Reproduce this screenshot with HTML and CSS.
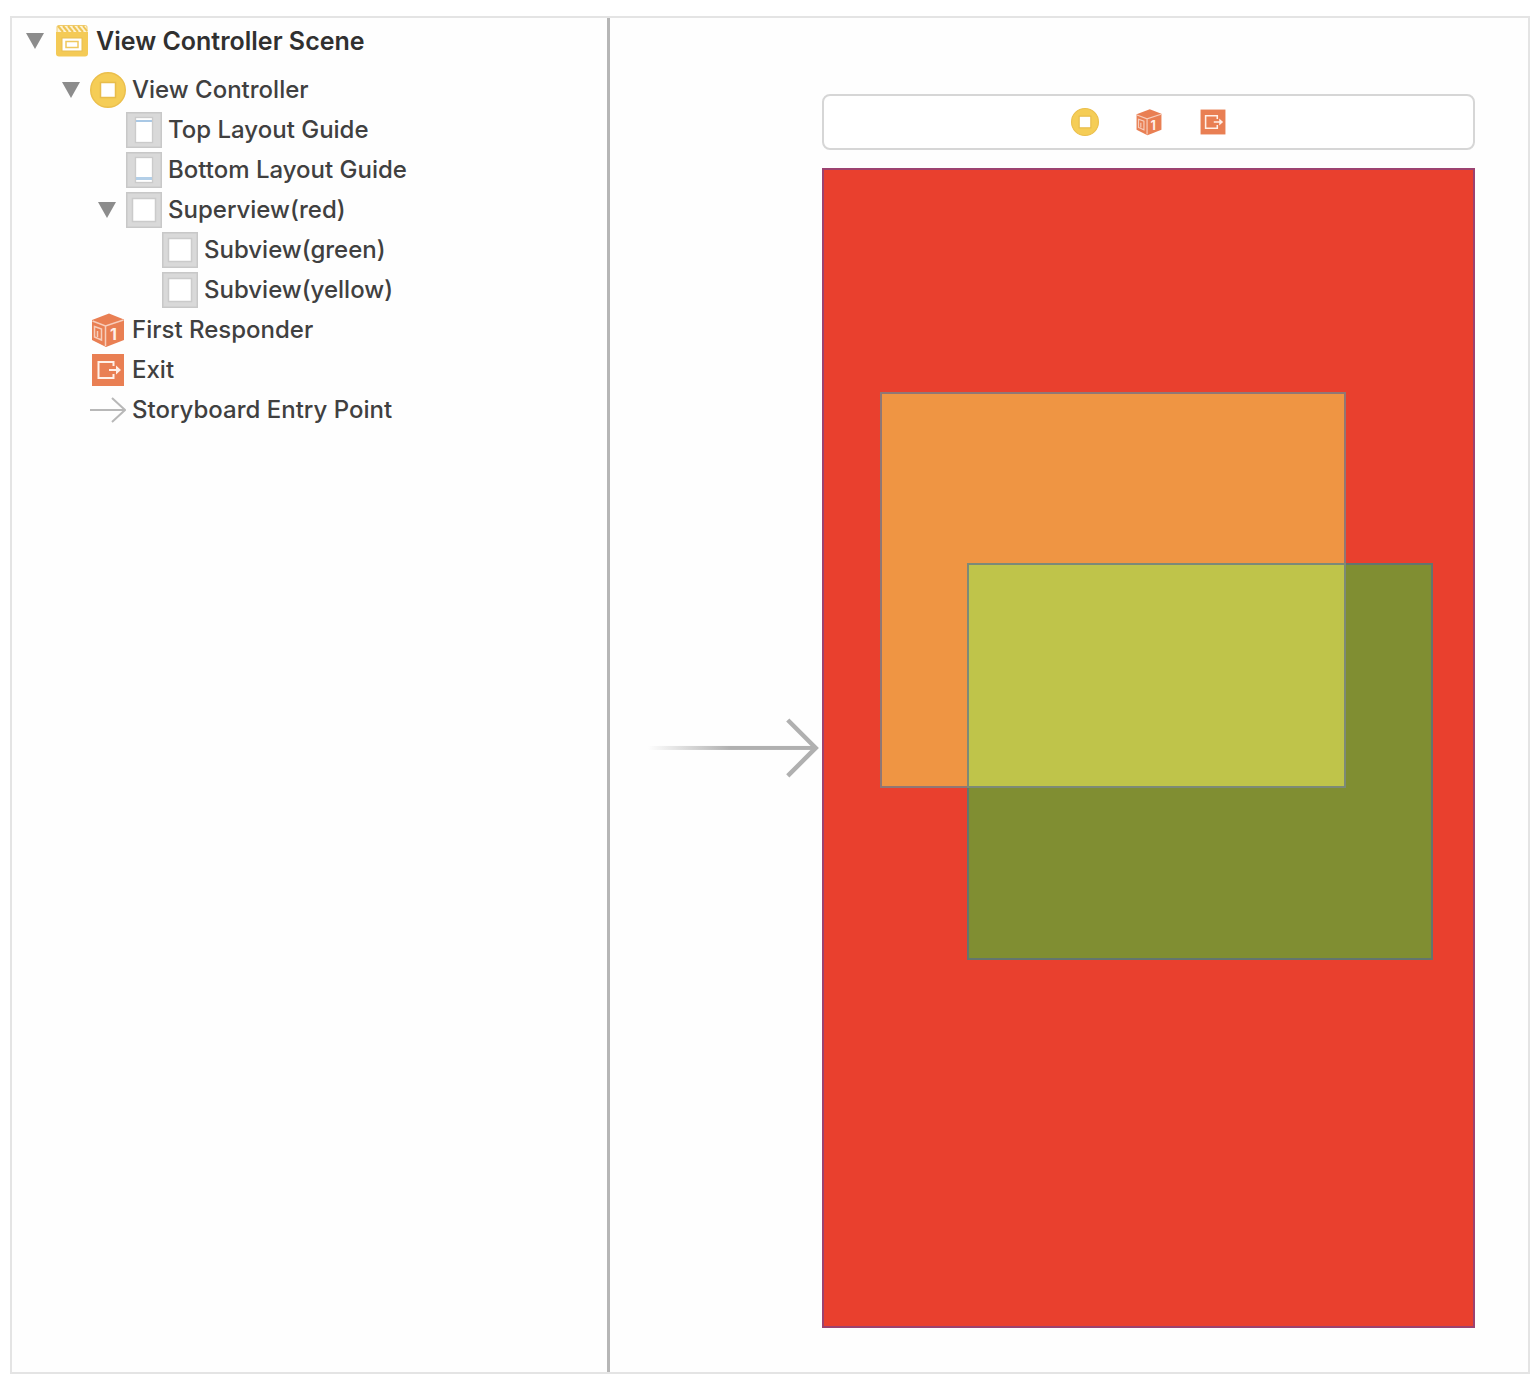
FILE: index.html
```html
<!DOCTYPE html>
<html lang="en">
<head>
<meta charset="utf-8">
<title>View Controller Scene</title>
<link rel="stylesheet" href="styles.css">
</head>
<body>
<svg class="defs" width="0" height="0" aria-hidden="true">
  <symbol id="triangle" viewBox="0 0 18 16">
    <path d="M0 0h18L9 16z" fill="#8c8c8c"/>
  </symbol>
  <symbol id="controller" viewBox="0 0 36 36">
    <circle cx="18" cy="18" r="17.3" fill="#f5cd56" stroke="#ebbf4c" stroke-width="1.4"/>
    <rect x="10.5" y="10.5" width="15" height="15" fill="#fff" stroke="#e8bd4b" stroke-width="1.5"/>
  </symbol>
  <symbol id="responder" viewBox="0 0 36 36">
    <path d="M19 1.500 34 7.500v20.500L16 35 2 28V8z" fill="#e97f53"/>
    <path d="M2.500 9 15.500 14 33.500 8M15.500 14v20" fill="none" stroke="#f7cdbb" stroke-width="1.500"/>
    <path d="M4.500 14.500l7 2.500v11l-7-3z" fill="none" stroke="#f7cdbb" stroke-width="1.500"/>
    <path d="M7.500 19v6" fill="none" stroke="#f7cdbb" stroke-width="1.500"/>
    <text x="20" y="28" class="cube-digit">1</text>
  </symbol>
  <symbol id="exit" viewBox="0 0 36 36">
    <rect x="2" y="2" width="32" height="32" fill="#e97f53"/>
    <path d="M23.500 14V10H8.500v16h15v-4M19 18h9" fill="none" stroke="#fff0e8" stroke-width="2"/>
    <path d="M26 13.500 31 18l-5 4.500z" fill="#fff0e8"/>
  </symbol>
  <symbol id="view" viewBox="0 0 36 36">
    <rect x=".75" y=".75" width="34.500" height="34.500" fill="#d9d9d9" stroke="#c8c8c8" stroke-width="1.500"/>
    <rect x="6.500" y="6.500" width="23" height="23" fill="#fff" stroke="#cbcbcb" stroke-width="1.500"/>
  </symbol>
  <symbol id="top-guide" viewBox="0 0 36 36">
    <rect x=".75" y=".75" width="34.500" height="34.500" fill="#d9d9d9" stroke="#c8c8c8" stroke-width="1.500"/>
    <rect x="9.500" y="5.500" width="17" height="25" fill="#fff" stroke="#cbcbcb" stroke-width="1.300"/>
    <path d="M10 9h16" stroke="#a9c8e5" stroke-width="2"/>
  </symbol>
  <symbol id="bottom-guide" viewBox="0 0 36 36">
    <rect x=".75" y=".75" width="34.500" height="34.500" fill="#d9d9d9" stroke="#c8c8c8" stroke-width="1.500"/>
    <rect x="9.500" y="5.500" width="17" height="25" fill="#fff" stroke="#cbcbcb" stroke-width="1.300"/>
    <path d="M10 26.500h16" stroke="#b3cfe8" stroke-width="3"/>
  </symbol>
</svg>
<main class="editor">
  <nav class="outline" aria-label="Document outline">
    <ul class="tree">
      <li>
        <div class="row row-scene">
          <button class="toggle" aria-label="Collapse scene"><svg aria-hidden="true"><use href="#triangle"/></svg></button>
          <svg class="icon" viewBox="0 0 36 36" aria-hidden="true">
            <rect x="3" y="2.500" width="30" height="12" rx="1.500" fill="#fdf3d4" stroke="#f0cc70"/>
            <path d="M4 3l5 6M9 3l5 6M14 3l5 6M19 3l5 6M24 3l5 6M29 3l4 5" stroke="#efc453" stroke-width="2"/>
            <path d="M2 9h32v21.500a3 3 0 0 1-3 3H5a3 3 0 0 1-3-3z" fill="#f4ca56"/>
            <rect x="8" y="15" width="20" height="13" fill="#fff" stroke="#e7bd50"/>
            <rect x="12" y="18.500" width="12" height="6" fill="#fff" stroke="#efc85e" stroke-width="1.500"/>
          </svg>
          <span>View Controller Scene</span>
        </div>
        <ul>
          <li>
            <div class="row">
              <button class="toggle" aria-label="Collapse view controller"><svg aria-hidden="true"><use href="#triangle"/></svg></button>
              <svg class="icon" aria-hidden="true"><use href="#controller"/></svg>
              <span>View Controller</span>
            </div>
            <ul>
              <li><div class="row leaf"><svg class="icon" aria-hidden="true"><use href="#top-guide"/></svg><span>Top Layout Guide</span></div></li>
              <li><div class="row leaf"><svg class="icon" aria-hidden="true"><use href="#bottom-guide"/></svg><span>Bottom Layout Guide</span></div></li>
              <li>
                <div class="row">
                  <button class="toggle" aria-label="Collapse superview"><svg aria-hidden="true"><use href="#triangle"/></svg></button>
                  <svg class="icon" aria-hidden="true"><use href="#view"/></svg>
                  <span>Superview(red)</span>
                </div>
                <ul>
                  <li><div class="row leaf"><svg class="icon" aria-hidden="true"><use href="#view"/></svg><span>Subview(green)</span></div></li>
                  <li><div class="row leaf"><svg class="icon" aria-hidden="true"><use href="#view"/></svg><span>Subview(yellow)</span></div></li>
                </ul>
              </li>
            </ul>
          </li>
          <li><div class="row leaf"><svg class="icon" aria-hidden="true"><use href="#responder"/></svg><span>First Responder</span></div></li>
          <li><div class="row leaf"><svg class="icon" aria-hidden="true"><use href="#exit"/></svg><span>Exit</span></div></li>
          <li>
            <div class="row leaf">
              <svg class="icon" viewBox="0 0 36 36" aria-hidden="true"><path d="M0 18h35M22 6l13 12-13 12" fill="none" stroke="#b8b8b8" stroke-width="2"/></svg>
              <span>Storyboard Entry Point</span>
            </div>
          </li>
        </ul>
      </li>
    </ul>
  </nav>
  <section class="canvas" aria-label="Storyboard canvas">
    <div class="dock">
      <button class="dock-item" aria-label="View Controller"><svg aria-hidden="true"><use href="#controller"/></svg></button>
      <button class="dock-item" aria-label="First Responder"><svg aria-hidden="true"><use href="#responder"/></svg></button>
      <button class="dock-item" aria-label="Exit"><svg aria-hidden="true"><use href="#exit"/></svg></button>
    </div>
    <svg class="entry" viewBox="0 0 172 60" aria-hidden="true">
      <defs>
        <linearGradient id="fade"><stop offset="0" stop-color="#b0b0b0" stop-opacity="0"/><stop offset=".5" stop-color="#b0b0b0"/></linearGradient>
      </defs>
      <rect x="0" y="28" width="166" height="4" fill="url(#fade)"/>
      <path d="M140 2l28 28-28 28" fill="none" stroke="#b0b0b0" stroke-width="4.500"/>
    </svg>
    <div class="superview">
      <div class="subview yellow"></div>
      <div class="subview green"></div>
      <div class="subview overlap"></div>
    </div>
  </section>
</main>
</body>
</html>
```
FILE: styles.css
```css
* {
  box-sizing: border-box;
}

body {
  margin: 16px 10px 20px;
  background: #fff;
  color: #404040;
  font: 500 24px/40px Inter, "Liberation Sans", sans-serif;
}

button {
  padding: 0;
  border: 0;
  background: none;
}

.defs {
  position: absolute;
}

.editor {
  display: grid;
  grid-template-columns: 598fr 918fr;
  border: 2px solid #e4e4e4;
  background: #fefefe;
}

.outline {
  padding: 3px 14px;
  border-right: 3px solid #b6b6b6;
}

.tree,
.tree ul {
  margin: 0;
  padding: 0;
  list-style: none;
}

.tree ul {
  padding-left: 36px;
}

.row {
  display: flex;
  align-items: center;
  height: 40px;
  white-space: nowrap;
}

.row-scene {
  margin-bottom: 9px;
  color: #303030;
  font-size: 25px;
  font-weight: 600;
}

.leaf {
  padding-left: 28px;
}

.toggle {
  margin-right: 10px;
}

.toggle,
.toggle svg {
  display: block;
  width: 18px;
  height: 16px;
}

.icon {
  flex: none;
  width: 36px;
  height: 36px;
  margin-right: 6px;
}

.cube-digit {
  fill: #fff0e8;
  font: 700 16px Inter, sans-serif;
}

.canvas {
  display: grid;
  grid-template-columns: 212fr 653fr 53fr;
  row-gap: 18px;
  padding: 76px 0 44px;
}

.dock {
  grid-column: 2;
  display: flex;
  align-items: center;
  justify-content: center;
  gap: 36px;
  height: 56px;
  border: 2px solid #d6d6d6;
  border-radius: 8px;
  background: #fff;
}

.dock-item,
.dock-item svg {
  display: block;
  width: 28px;
  height: 28px;
}

.entry {
  grid-column: 1;
  align-self: center;
  justify-self: end;
  width: 81%;
  margin-right: 2px;
}

.superview {
  grid-column: 2;
  position: relative;
  aspect-ratio: 653 / 1160;
  border: 2px solid #9c4270;
  background: #e9402e;
}

.subview {
  position: absolute;
  border: 2px solid rgba(80, 100, 150, 0.6);
}

.yellow {
  left: 8.7%;
  top: 19.2%;
  width: 71.8%;
  height: 34.3%;
  background: #ef9543;
}

.green {
  left: 22.1%;
  top: 34%;
  width: 71.8%;
  height: 34.3%;
  background: #808e32;
}

.overlap {
  left: 22.1%;
  top: 34%;
  width: 58.4%;
  height: 19.5%;
  background: #bfc44a;
}
```
